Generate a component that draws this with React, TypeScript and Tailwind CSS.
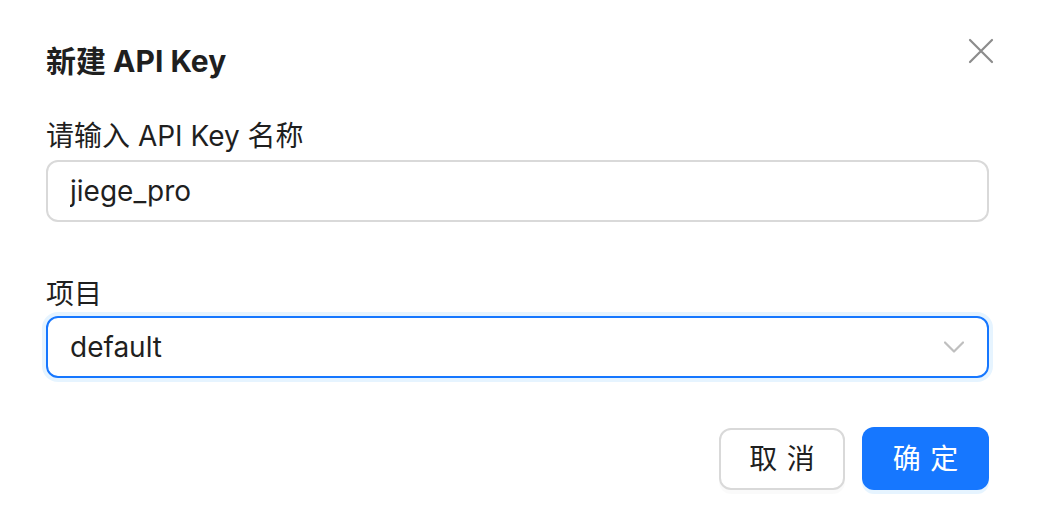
import React, { useState } from 'react';

const font = { fontFamily: 'Inter, "Noto Sans CJK SC", sans-serif' };

const CloseIcon = () => (
  <svg width="26" height="26" viewBox="0 0 26 26" fill="none">
    <path d="M2 2L24 24M24 2L2 24" stroke="#8c8c8c" strokeWidth="2.2" strokeLinecap="round" />
  </svg>
);

const ChevronDown = () => (
  <svg width="20" height="12" viewBox="0 0 20 12" fill="none">
    <path d="M1 1.5L10 10.5L19 1.5" stroke="#bfbfbf" strokeWidth="2.2" strokeLinecap="round" strokeLinejoin="round" />
  </svg>
);

export default function App() {
  const [name, setName] = useState('jiege_pro');

  return (
    <div className="w-[1038px] h-[522px] bg-white text-[#1f1f1f] overflow-hidden" style={font}>
      <div className="pl-[46px] pr-[49px] pt-[39px]">
        {/* Header */}
        <div className="flex items-start justify-between h-[45px]">
          <h1 className="text-[30px] leading-[45px] font-bold">新建 API Key</h1>
          <button className="w-[44px] h-[44px] -mt-[10px] -mr-[14px] flex items-center justify-center">
            <CloseIcon />
          </button>
        </div>

        {/* Name field */}
        <label className="block mt-[30px] text-[28px] leading-[44px]">请输入 API Key 名称</label>
        <input
          value={name}
          onChange={(e) => setName(e.target.value)}
          className="mt-[2px] w-full h-[62px] px-[22px] border-2 border-[#d9d9d9] rounded-[12px] text-[28px] outline-none"
        />

        {/* Project select */}
        <label className="block mt-[50px] text-[28px] leading-[44px]">项目</label>
        <div className="w-full h-[62px] px-[22px] border-2 border-[#1677ff] rounded-[12px] shadow-[0_0_0_4px_rgba(5,145,255,0.1)] flex items-center justify-between">
          <span className="text-[28px]">default</span>
          <span className="mr-[1px]">
            <ChevronDown />
          </span>
        </div>

        {/* Footer */}
        <div className="mt-[50px] flex justify-end gap-[17px]">
          <button className="w-[126px] h-[62px] border-2 border-[#d9d9d9] rounded-[12px] bg-white text-[28px] shadow-[0_4px_0_rgba(0,0,0,0.02)]">
            <span className="tracking-[0.34em] -mr-[0.34em]">取消</span>
          </button>
          <button className="w-[127px] h-[63px] -mt-px rounded-[12px] bg-[#1677ff] text-white text-[28px] shadow-[0_4px_0_rgba(5,145,255,0.1)]">
            <span className="tracking-[0.34em] -mr-[0.34em]">确定</span>
          </button>
        </div>
      </div>
    </div>
  );
}
